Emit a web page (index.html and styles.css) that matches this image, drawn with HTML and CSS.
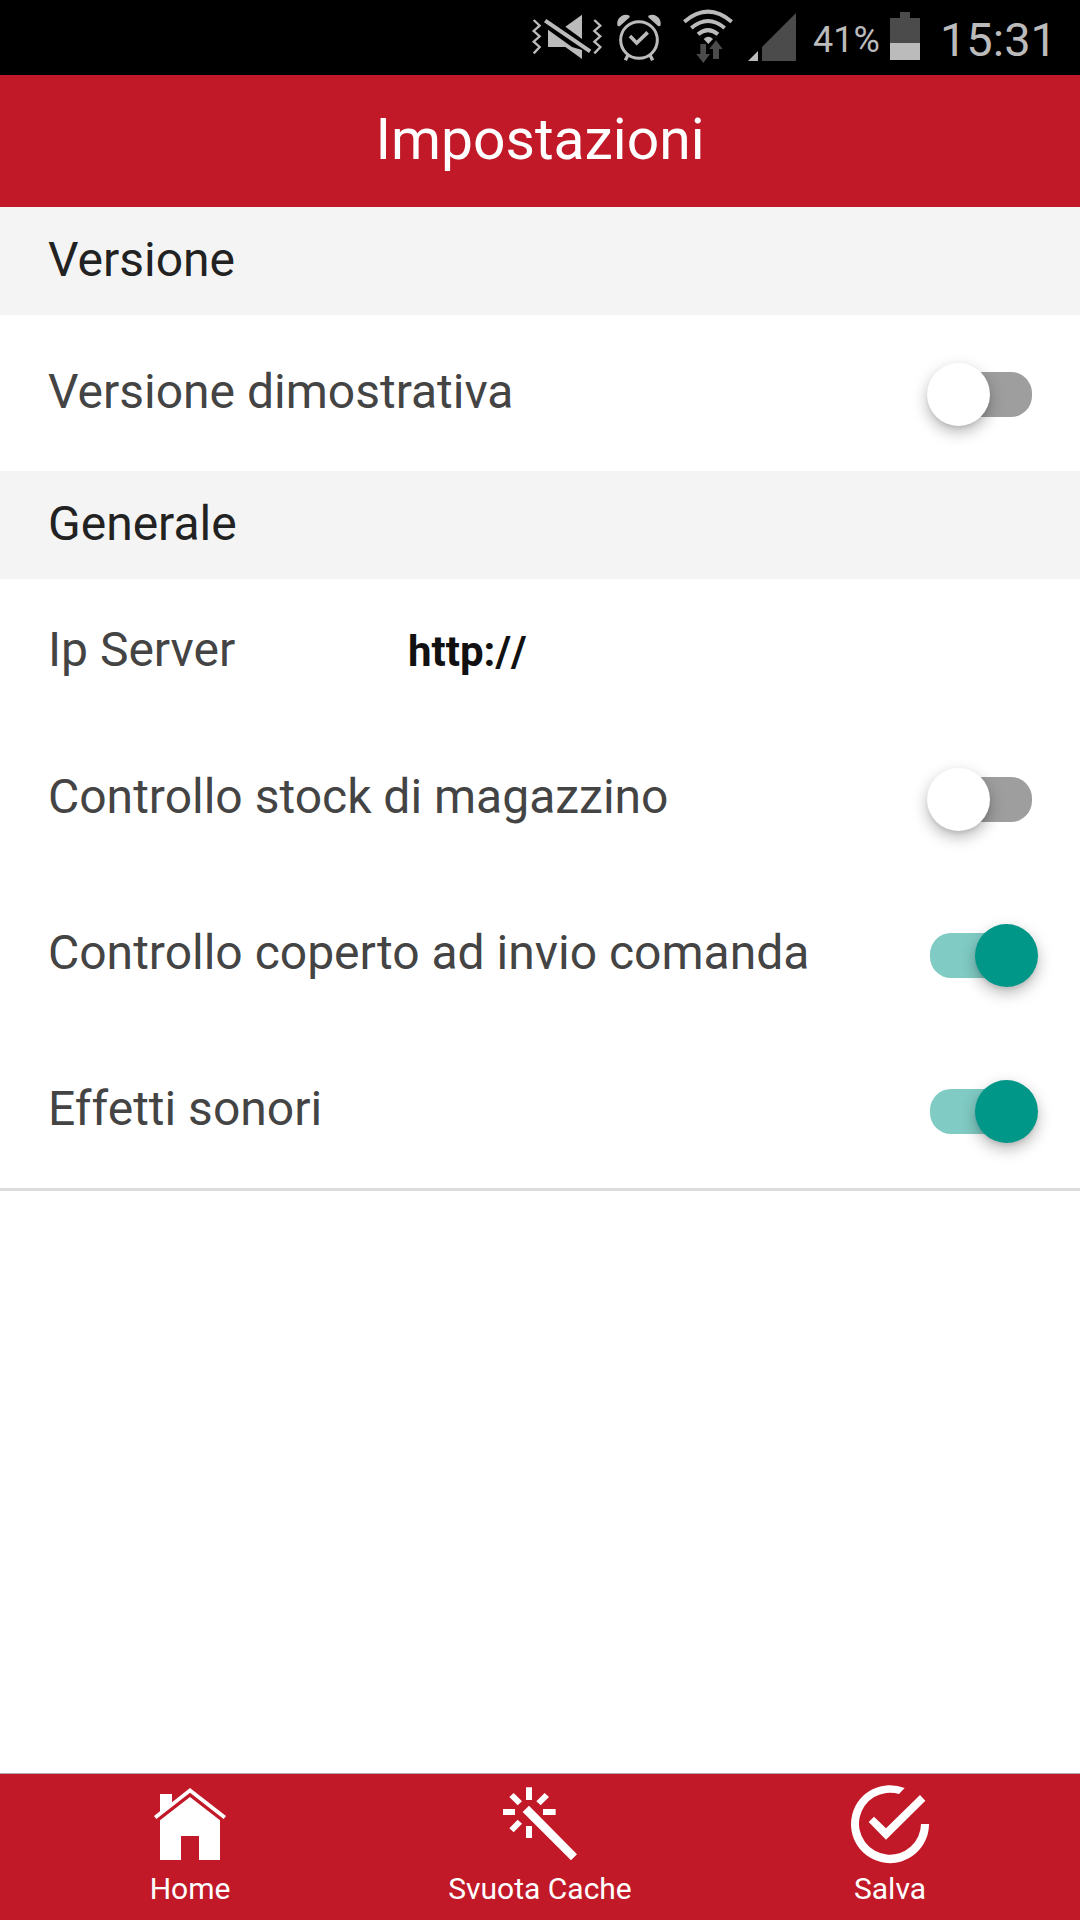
FILE: index.html
```html
<!DOCTYPE html>
<html lang="it">
<head>
<meta charset="utf-8">
<meta name="viewport" content="width=device-width, initial-scale=1">
<title>Impostazioni</title>
<link rel="stylesheet" href="styles.css">
</head>
<body>
<div class="app">
  <div class="status-bar">
    <svg class="status-icon status-icon-wide" viewBox="0 0 252 225" aria-hidden="true">
      <g transform="translate(-15 0)">
        <path class="line" stroke-width="7" d="M41 60L59 77L41 93L59 109L41 125L59 141L41 160M223 60L241 77L223 93L241 109L223 125L241 141L223 160"/>
        <path d="M186 44V117L136 80ZM84 89L156 141H84ZM136 141H156L186 150V177ZM79 57L214 149L207 159L72 67Z"/>
      </g>
    </svg>
    <svg class="status-icon" viewBox="0 0 198 225" aria-hidden="true">
      <g transform="translate(-267 0)">
        <circle class="line" stroke-width="9" cx="357" cy="120" r="55"/>
        <path class="line" stroke-width="11" d="M330 108L350 129L383 97"/>
        <path class="line" stroke-width="10" d="M324 165L316 181M390 165L398 181"/>
        <path d="M293 78C286 58 308 36 329 47V52L299 79ZM421 78C428 58 406 36 385 47V52L415 79Z"/>
      </g>
    </svg>
    <svg class="status-icon" viewBox="0 0 198 225" aria-hidden="true">
      <g transform="translate(-465 0)">
        <path class="line" stroke-width="12" d="M493 65Q564 5 635 65M514 84Q564 42 614 84M534 103Q564 78 594 103"/>
        <path d="M551 117Q565 104 579 117L565 132Z"/>
        <path class="dim" d="M541 132H558V162H570L550 189L529 162H541ZM579 177V147H568L588 121L608 147H597V177Z"/>
      </g>
    </svg>
    <svg class="status-icon" viewBox="0 0 198 225" aria-hidden="true">
      <g transform="translate(-663 0)">
        <path d="M684 183L714 153V183Z"/>
        <path class="dim" d="M726 183V141L828 39V183Z"/>
      </g>
    </svg>
    <span class="battery-level">41%</span>
    <svg class="battery" viewBox="0 0 90 225" aria-hidden="true">
      <path class="dim" d="M30 36H60V54H90V129H0V54H30Z"/>
      <path d="M0 129H90V180H0Z"/>
    </svg>
    <time class="clock">15:31</time>
  </div>

  <header class="app-header"><h1>Impostazioni</h1></header>

  <main class="settings">
    <section>
      <h2>Versione</h2>
      <div class="row">
        <label for="demo">Versione dimostrativa</label>
        <input class="switch" type="checkbox" id="demo">
      </div>
    </section>
    <section class="last">
      <h2>Generale</h2>
      <div class="row row-field">
        <label for="server">Ip Server</label>
        <input class="field" type="text" id="server" value="http://">
      </div>
      <div class="row">
        <label for="stock">Controllo stock di magazzino</label>
        <input class="switch" type="checkbox" id="stock">
      </div>
      <div class="row">
        <label for="cover">Controllo coperto ad invio comanda</label>
        <input class="switch" type="checkbox" id="cover" checked>
      </div>
      <div class="row">
        <label for="sound">Effetti sonori</label>
        <input class="switch" type="checkbox" id="sound" checked>
      </div>
    </section>
  </main>

  <nav class="tabs">
    <button class="tab" type="button">
      <svg viewBox="0 0 240 240" aria-hidden="true">
        <path d="M30 228V109L120 39L210 109V228H147V156H93V228Z"/>
        <path d="M30 30H66V55L120 12L228 96L221 105L120 26L19 105L12 96L30 82Z"/>
      </svg>
      <span>Home</span>
    </button>
    <button class="tab" type="button">
      <svg viewBox="0 0 240 240" aria-hidden="true">
        <path transform="translate(-10 -2)" d="M88 12H106V50H88ZM88 128H106V164H88ZM19 77H55V95H19ZM139 77H177V95H139ZM51 29L76 54L63 66L38 41ZM144 29L157 41L132 66L119 54ZM63 109L76 121L51 147L38 135ZM97 67L241 213L223 231L78 86Z"/>
      </svg>
      <span>Svuota Cache</span>
    </button>
    <button class="tab" type="button">
      <svg viewBox="0 0 240 240" aria-hidden="true">
        <path transform="translate(0 -2)" d="M164 14A117 117 0 1 0 237 122H213A93 93 0 1 1 147 32ZM72 100L108 135L210 35L226 52L108 169L56 116Z"/>
      </svg>
      <span>Salva</span>
    </button>
  </nav>
</div>
</body>
</html>
```
FILE: styles.css
```css
* {
  box-sizing: border-box;
}

body {
  margin: 0;
  background: #fff;
  color: #444;
  font-family: Roboto, "Liberation Sans", sans-serif;
  font-size: 48px;
}

.app {
  display: flex;
  flex-direction: column;
  min-height: 100vh;
}

.status-bar {
  display: flex;
  align-items: center;
  justify-content: flex-end;
  height: 75px;
  padding-right: 23px;
  background: #000;
  color: #bbb;
}

.status-icon,
.battery {
  flex: none;
  width: 66px;
  height: 75px;
  fill: #bbb;
  overflow: visible;
}

.status-icon-wide {
  width: 84px;
}

.battery {
  width: 30px;
}

.line {
  fill: none;
  stroke: #bbb;
}

.dim {
  fill: #4b4b4b;
}

.battery-level {
  padding: 4px 10px 0 6px;
  font-size: 36px;
}

.clock {
  padding: 3px 0 0 20px;
  font-size: 47px;
}

.app-header {
  display: flex;
  align-items: center;
  justify-content: center;
  height: 132px;
  padding-bottom: 4px;
  background: #c11928;
  color: #fff;
}

h1,
h2 {
  margin: 0;
  font-weight: 400;
}

h1 {
  font-size: 57px;
}

.settings {
  flex: 1;
}

h2 {
  height: 108px;
  padding: 0 48px;
  background: #f4f4f4;
  color: #222;
  font-size: 48px;
  line-height: 106px;
}

.last {
  border-bottom: 3px solid #dcdcdc;
}

.row {
  display: flex;
  align-items: center;
  justify-content: space-between;
  height: 156px;
  padding: 0 42px 0 48px;
}

.row label {
  line-height: 56px;
  padding-bottom: 2px;
}

.row-field {
  height: 141px;
  padding-top: 2px;
}

.row-field label {
  flex: none;
  width: 360px;
}

.field {
  flex: 1;
  min-width: 0;
  padding: 2px 0 0;
  border: 0;
  outline: 0;
  background: none;
  color: #111;
  font: bold 42px/56px Roboto, "Liberation Sans", sans-serif;
  font-kerning: none;
}

.switch {
  appearance: none;
  position: relative;
  flex: none;
  width: 111px;
  height: 63px;
  margin: 2px 0 0;
}

.switch::before,
.switch::after {
  content: "";
  position: absolute;
}

.switch::before {
  inset: 9px 6px 9px 3px;
  border-radius: 21px;
  background: #9e9e9e;
}

.switch::after {
  top: 0;
  left: 0;
  width: 63px;
  height: 63px;
  border-radius: 50%;
  background: #fff;
  box-shadow: 0 6px 15px rgba(0, 0, 0, 0.28), 0 3px 3px rgba(0, 0, 0, 0.06);
}

.switch:checked::before {
  background: #80cbc4;
}

.switch:checked::after {
  left: 48px;
  background: #009688;
}

.tabs {
  display: flex;
  height: 147px;
  padding: 0 15px;
  border-top: 1px solid #aaa;
  background: #c11928;
}

.tab {
  display: flex;
  flex: 1;
  flex-direction: column;
  align-items: center;
  gap: 7px;
  padding: 10px 0 0;
  border: 0;
  background: none;
  color: #fff;
  font: 30px/36px Roboto, "Liberation Sans", sans-serif;
}

.tab svg {
  width: 80px;
  height: 80px;
  fill: #fff;
  overflow: visible;
}
```
